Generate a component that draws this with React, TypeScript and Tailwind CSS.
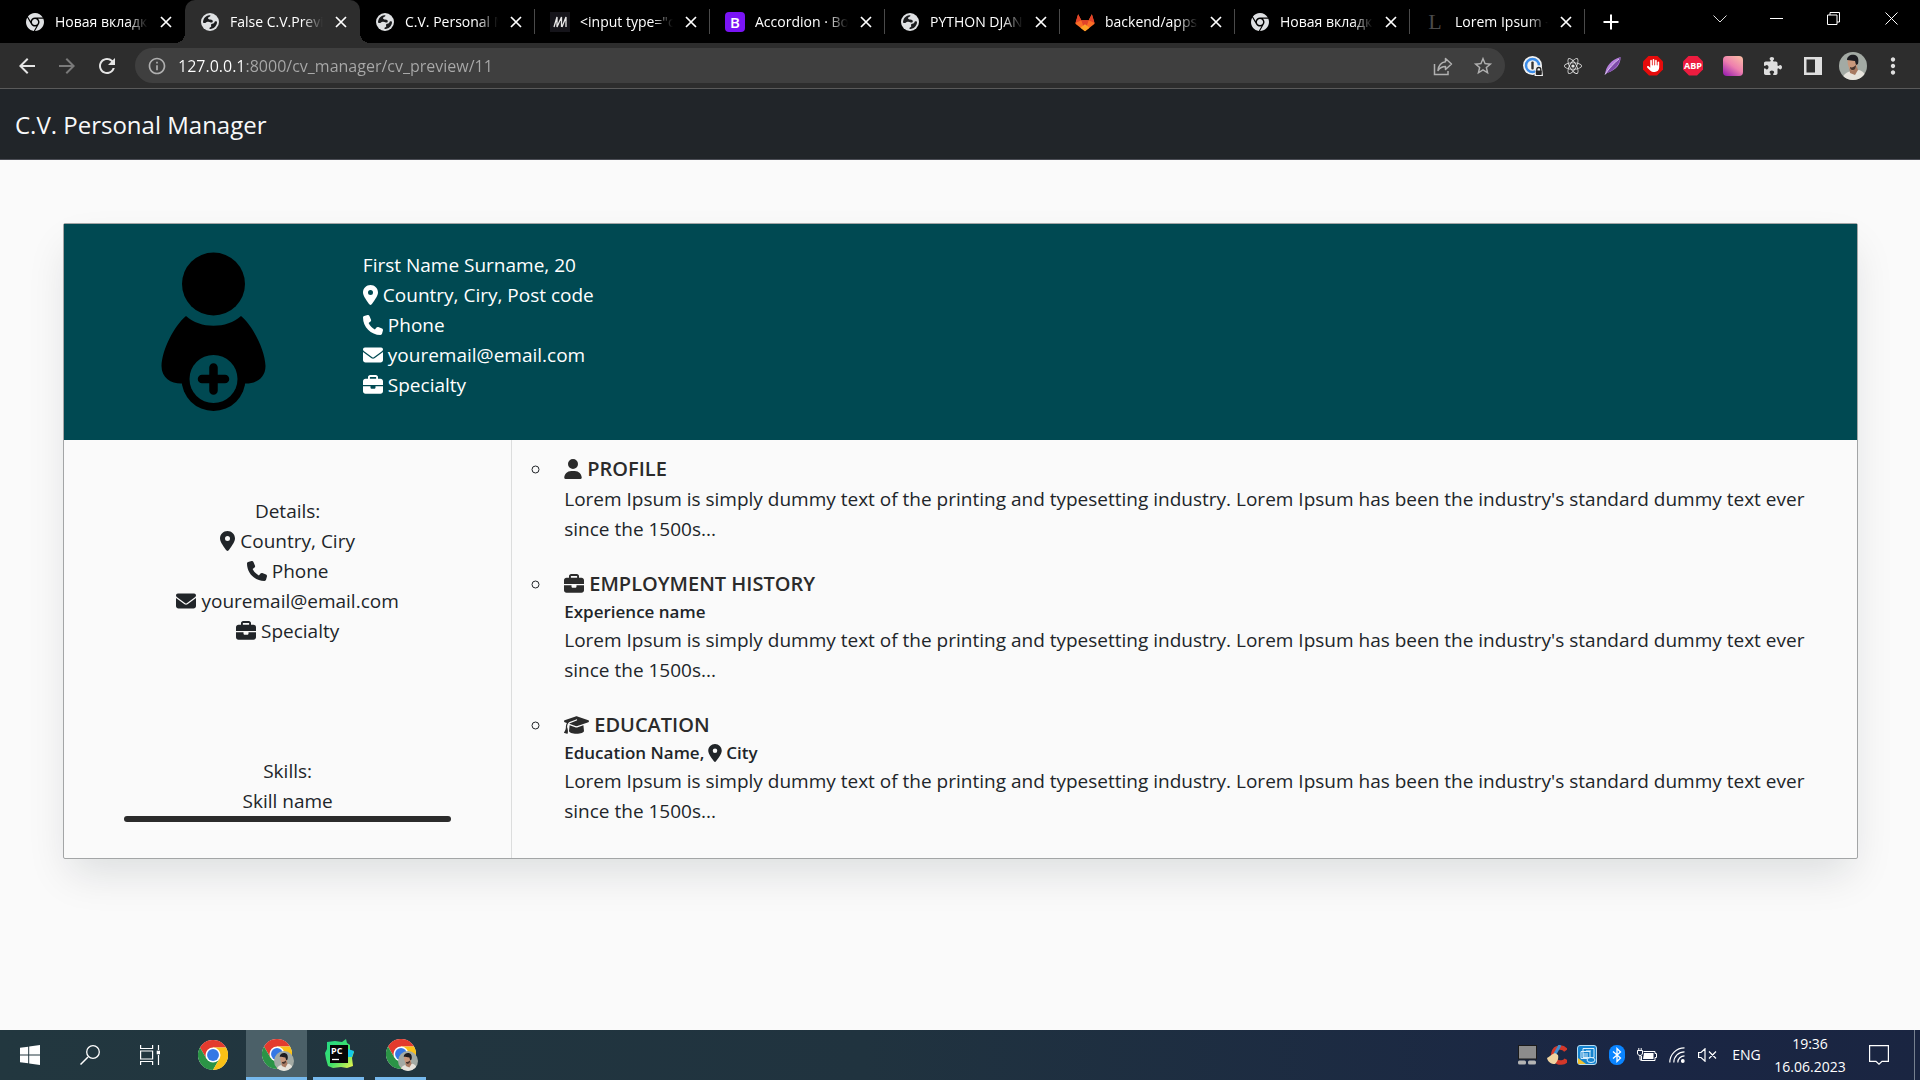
import type { ReactNode } from "react";
import {
  FaBriefcase,
  FaChrome,
  FaEnvelope,
  FaGraduationCap,
  FaHand,
  FaLocationDot,
  FaPhone,
  FaPuzzlePiece,
  FaReact,
  FaUser,
} from "react-icons/fa6";
import { MdArrowBack, MdArrowForward, MdInfoOutline, MdMoreVert, MdRefresh, MdStarBorder } from "react-icons/md";

const LOREM =
  "Lorem Ipsum is simply dummy text of the printing and typesetting industry. Lorem Ipsum has been the industry's standard dummy text ever since the 1500s...";

/* ---------- favicons ---------- */

const Globe = () => (
  <svg viewBox="0 0 18 18" className="size-[18px]" aria-hidden="true">
    <circle cx="9" cy="9" r="9" fill="#dfe1e3" />
    <path
      d="M2 9.2c.2-3.600 2.600-6.400 6.200-7 .9-.1 1.500.1 1.200.7-.4.8-1.700.8-2.200 1.700-.5.800.1 1.700 1.100 1.800 1.300.2 2.900.1 3.400 1.300.5 1.300-.8 2.200-1.900 1.700-1.300-.5-2.600-1-3.900-.5-1.100.4-1.500 1.300-2.500 1.100-.8-.1-1.400-.3-1.400-.8z"
      fill="#1b1c1e"
    />
    <path
      d="M16 9.500c-.3 3.200-2.700 5.900-6 6.400-1.100.2-1.900-.2-1.500-1 .4-.7 1.300-.6 1.700-1.400.3-.8-.5-1.300-.1-2.100.5-.9 1.900-.5 2.700-1.200.7-.6.7-1.600 1.600-1.900.9-.2 1.700.3 1.600 1.200z"
      fill="#1b1c1e"
    />
  </svg>
);

const ChromeMono = () => <FaChrome className="size-[18px] text-[#dfe1e3]" aria-hidden="true" />;

const Mdn = () => (
  <svg viewBox="0 0 20 20" className="size-5" aria-hidden="true">
    <rect width="20" height="20" fill="#15141a" />
    <path d="M4 15 7 5v10L11.500 5v10M12 15 16 5v10" stroke="#e8e8e8" strokeWidth="1.300" fill="none" />
  </svg>
);

const Bootstrap = () => (
  <span className="flex size-5 items-center justify-center rounded bg-[#7a14f5] text-[15px] leading-5 font-semibold text-white">B</span>
);

const Gitlab = () => (
  <svg viewBox="0 0 24 24" className="size-[22px]" aria-hidden="true">
    <path d="M12 22 1.500 14 4.500 3.500 8 10h8l3.500-6.500 3 10.500z" fill="#fc6d26" />
    <path d="M12 22 8 10h8z" fill="#e24329" />
    <path d="M1.500 13 4.500 3.500 8 10zM22.500 13l-3-9.500L16 10z" fill="#e24329" />
    <path d="M7 18.200 12 22l5-3.800-5-3.700z" fill="#fca326" />
  </svg>
);

const LetterL = () => (
  <span className="block w-5 text-center font-['Liberation_Serif',serif] text-[22px] leading-5 text-[#4a4a4a]">L</span>
);

const TABS: { title: string; icon: ReactNode; active?: boolean; divider?: boolean }[] = [
  { title: "Новая вкладка", icon: <ChromeMono /> },
  { title: "False C.V.Previ", icon: <Globe />, active: true },
  { title: "C.V. Personal M", icon: <Globe />, divider: true },
  { title: '<input type="c', icon: <Mdn />, divider: true },
  { title: "Accordion · Bo", icon: <Bootstrap />, divider: true },
  { title: "PYTHON DJAN", icon: <Globe />, divider: true },
  { title: "backend/apps/", icon: <Gitlab />, divider: true },
  { title: "Новая вкладка", icon: <ChromeMono />, divider: true },
  { title: "Lorem Ipsum -", icon: <LetterL />, divider: true },
];

const Cross = () => (
  <svg viewBox="0 0 12 12" className="size-3" aria-hidden="true">
    <path d="M1 1l10 10M11 1 1 11" stroke="#fff" strokeWidth="1.700" />
  </svg>
);

function TabStrip() {
  return (
    <div className="flex h-[43px] bg-black pl-[10px] text-white">
      {TABS.map((tab, i) => (
        <div
          key={i}
          className={
            tab.active
              ? "relative flex w-[175px] items-center rounded-t-[10px] bg-[#2d2d2d] pl-[14px] before:absolute before:bottom-0 before:-left-[10px] before:size-[10px] before:bg-[radial-gradient(circle_at_0_0,transparent_10px,#2d2d2d_10px)] after:absolute after:-right-[10px] after:bottom-0 after:size-[10px] after:bg-[radial-gradient(circle_at_100%_0,transparent_10px,#2d2d2d_10px)]"
              : "flex w-[175px] items-center pl-[14px]"
          }
        >
          <button type="button" className="flex min-w-0 flex-1 items-center gap-[9px] text-left">
            <span className="flex w-[22px] shrink-0 justify-center">{tab.icon}</span>
            <span className="min-w-0 flex-1 overflow-hidden text-[14px] leading-5 whitespace-nowrap [mask-image:linear-gradient(to_right,black_78%,transparent)]">
              {tab.title}
            </span>
          </button>
          <button type="button" aria-label="Close tab" className="flex w-[35px] items-center justify-center">
            <Cross />
          </button>
          <span className={tab.divider ? "ml-px h-[25px] w-px bg-[#4a4a4a]" : "ml-px w-px"} />
        </div>
      ))}
      <button type="button" aria-label="New tab" className="flex w-[52px] items-center justify-center">
        <svg viewBox="0 0 16 16" className="size-4" aria-hidden="true">
          <path d="M8 .5v15M.5 8h15" stroke="#fff" strokeWidth="2" />
        </svg>
      </button>
      <div className="ml-auto flex h-[37px]">
        <button type="button" aria-label="Search tabs" className="flex w-[57px] items-center justify-center">
          <svg viewBox="0 0 14 8" className="h-2 w-[14px]" aria-hidden="true">
            <path d="M.5.5 7 7 13.500.5" stroke="#ddd" fill="none" />
          </svg>
        </button>
        <button type="button" aria-label="Minimize" className="flex w-[57px] items-center justify-center">
          <span className="h-px w-[13px] bg-white" />
        </button>
        <button type="button" aria-label="Restore" className="flex w-[57px] items-center justify-center">
          <svg viewBox="0 0 13 13" className="size-[13px]" aria-hidden="true">
            <path d="M.5 3h9.500v9.500H.5zM3 3V.5h9.500V10H10" stroke="#fff" fill="none" />
          </svg>
        </button>
        <button type="button" aria-label="Close" className="flex w-[58px] items-center justify-center">
          <svg viewBox="0 0 13 13" className="size-[13px]" aria-hidden="true">
            <path d="M.5.5l12 12M12.500.5l-12 12" stroke="#fff" />
          </svg>
        </button>
      </div>
    </div>
  );
}

/* ---------- toolbar ---------- */

const Face = ({ className }: { className: string }) => (
  <svg viewBox="0 0 28 28" className={className} aria-hidden="true">
    <clipPath id="face">
      <circle cx="14" cy="14" r="14" />
    </clipPath>
    <g clipPath="url(#face)">
      <rect width="28" height="28" fill="#a3aaa4" />
      <path d="M3 28c1-6 5-8 9-9l8-1c4 1 7 4 7 10z" fill="#e6e3dc" />
      <path d="M10 14l1 7 5 2 3-5-2-6z" fill="#a87a62" />
      <path d="M9 7c3-3 8-2 9 1 1 4 0 8-3 10-2 1-4 0-5-2-1-3-2-6-1-9z" fill="#c9987c" />
      <path d="M8 8c0-4 4-6 8-5 3 1 4 4 3 9l-2 1-1-4c-3 0-5-1-8-1z" fill="#1d1d22" />
      <path d="M11 15c2 1 4 0 6-2 0 3-1 5-3 5-2 .5-3-1-3-3z" fill="#46332d" />
    </g>
  </svg>
);

const EXTENSIONS: { label: string; icon: ReactNode }[] = [
  {
    label: "Password manager",
    icon: (
      <svg viewBox="0 0 20 20" className="size-5" aria-hidden="true">
        <circle cx="9.500" cy="9.500" r="9.500" fill="#f1f1f1" />
        <circle cx="9.500" cy="9.500" r="6.500" fill="#f1f1f1" stroke="#3b8ce8" strokeWidth="2.500" />
        <rect x="8.300" y="5.500" width="2.400" height="8" rx="1" fill="#333" />
        <path d="M12.500 12.500a3.300 3.300 0 0 1 6.600 0L20 20h-8.500z" fill="#f1f1f1" />
        <path d="M13.800 15v-1.500a2 2 0 0 1 4 0V15" stroke="#222" strokeWidth="1.300" fill="none" />
        <rect x="12.800" y="14.500" width="6" height="4.500" rx=".8" fill="#222" />
      </svg>
    ),
  },
  { label: "React tools", icon: <FaReact className="size-[18px] text-[#e4e4e4]" /> },
  {
    label: "Feather",
    icon: (
      <svg viewBox="0 0 20 20" className="size-5" aria-hidden="true">
        <path d="M2 18.500C3 10 8 4 17.500 1 18 7 14 14 4 17z" fill="#b57fdc" />
        <path d="M2 18.500C6 12 10 8 17.500 1 17 8 12 14 4 17z" fill="#7d4ba8" />
        <path d="M2 18.500C6 12 11 7 16 3" stroke="#f0e4fa" strokeWidth=".8" fill="none" />
      </svg>
    ),
  },
  {
    label: "Ad blocker",
    icon: (
      <span className="flex size-5 items-center justify-center bg-[#e60b0b] [clip-path:polygon(30%_0,70%_0,100%_30%,100%_70%,70%_100%,30%_100%,0_70%,0_30%)]">
        <FaHand className="size-[13px] text-white" />
      </span>
    ),
  },
  {
    label: "ABP",
    icon: (
      <span className="flex size-5 items-center justify-center bg-[#ed1c3f] text-[9px] leading-5 font-bold text-white [clip-path:polygon(30%_0,70%_0,100%_30%,100%_70%,70%_100%,30%_100%,0_70%,0_30%)]">
        ABP
      </span>
    ),
  },
  {
    label: "Gradient",
    icon: <span className="size-5 rounded-sm bg-[linear-gradient(35deg,#9a1fb0_5%,#ee7fae_50%,#fbc2a4)]" />,
  },
  { label: "Extensions", icon: <FaPuzzlePiece className="size-[18px] text-[#dedede]" /> },
  {
    label: "Side panel",
    icon: (
      <svg viewBox="0 0 18 18" className="size-[18px]" aria-hidden="true">
        <path d="M0 0h18v18H0zm2.500 2.500v13H11v-13z" fill="#dedede" fillRule="evenodd" />
      </svg>
    ),
  },
  { label: "Profile", icon: <Face className="size-7" /> },
  { label: "Menu", icon: <MdMoreVert className="size-[26px] text-[#dedede]" /> },
];

function Toolbar() {
  return (
    <div className="flex h-[46px] items-center border-b border-[#5a5a5a] bg-[#2d2d2d] pr-[7px] pl-[7px]">
      <button type="button" aria-label="Back" className="flex w-10 justify-center text-[#e4e4e4]">
        <MdArrowBack className="size-6" />
      </button>
      <button type="button" aria-label="Forward" className="flex w-10 justify-center text-[#7a7a7a]">
        <MdArrowForward className="size-6" />
      </button>
      <button type="button" aria-label="Reload" className="flex w-10 justify-center text-[#e4e4e4]">
        <MdRefresh className="size-6" />
      </button>
      <div className="ml-2 flex h-[35px] flex-1 items-center rounded-full bg-[#3f3f3f] pr-[2px] pl-3 text-[#b0b0b0]">
        <MdInfoOutline className="mr-[11px] size-5" aria-hidden="true" />
        <input
          type="text"
          aria-label="Address"
          defaultValue="127.0.0.1:8000/cv_manager/cv_preview/11"
          className="min-w-0 flex-1 bg-[linear-gradient(to_right,#ffffff_68px,#a9a9a9_68px)] bg-clip-text text-[16px] leading-6 text-transparent outline-none"
        />
        <button type="button" aria-label="Share" className="flex w-10 justify-center">
          <svg viewBox="0 0 20 20" className="size-5" aria-hidden="true">
            <path d="M1.500 8v10.500h13.500V15" stroke="currentColor" strokeWidth="1.500" fill="none" />
            <path d="M12.500 2.500 18.500 8l-6 5.500V10.500C9 10.500 7 11.500 5 14.500 5.500 9.500 8 6.500 12.500 5.800z" stroke="currentColor" strokeWidth="1.500" strokeLinejoin="round" fill="none" />
          </svg>
        </button>
        <button type="button" aria-label="Bookmark" className="flex w-10 justify-center">
          <MdStarBorder className="size-[22px]" />
        </button>
      </div>
      <div className="ml-2 flex">
        {EXTENSIONS.map((e) => (
          <button key={e.label} type="button" aria-label={e.label} className="flex h-7 w-10 items-center justify-center">
            {e.icon}
          </button>
        ))}
      </div>
    </div>
  );
}

/* ---------- page ---------- */

const Line = ({ icon, children }: { icon?: ReactNode; children: ReactNode }) => (
  <p className="flex items-center gap-[5px]">
    {icon}
    {children}
  </p>
);

const Pin = () => <FaLocationDot className="h-5 w-[15px] shrink-0" aria-hidden="true" />;
const Phone = () => <FaPhone className="size-5 shrink-0" aria-hidden="true" />;
const Mail = () => <FaEnvelope className="size-5 shrink-0" aria-hidden="true" />;
const Case = () => <FaBriefcase className="size-5 shrink-0" aria-hidden="true" />;

const PersonAdd = () => (
  <svg viewBox="0 0 107 160" className="h-40 w-[107px]" role="img" aria-label="Add photo">
    <circle cx="53.500" cy="32" r="31.500" />
    <path d="M26 64C40 77 67 77 81 64C93 74 105 98 105.500 114C105.500 126 96 131.500 86 131.500H21C11 131.500 1.500 126 1.500 114C2 98 14 74 26 64Z" />
    <circle cx="53.500" cy="127" r="32" />
    <circle cx="53.500" cy="127" r="24" fill="#004952" />
    <path d="M53.500 115.500v23M42 127h23" stroke="#000" strokeWidth="8.500" strokeLinecap="round" />
  </svg>
);

const SECTIONS: { icon: ReactNode; title: string; sub?: ReactNode }[] = [
  { icon: <FaUser className="h-5 w-[18px]" aria-hidden="true" />, title: "PROFILE" },
  { icon: <Case />, title: "EMPLOYMENT HISTORY", sub: "Experience name" },
  {
    icon: <FaGraduationCap className="h-5 w-[25px]" aria-hidden="true" />,
    title: "EDUCATION",
    sub: (
      <>
        Education Name, <FaLocationDot className="h-[18px] w-[14px]" aria-hidden="true" /> City
      </>
    ),
  },
];

function Page() {
  return (
    <main className="flex-1 bg-[#fafafa] pt-[63px] pr-[62px] pl-[63px]">
      <article className="rounded-[2px] border border-[#a3a5a6] bg-[#fafafa] shadow-[0_20px_40px_-6px_rgba(10,25,35,0.12)]">
        <header className="grid grid-cols-[1fr_5fr] bg-[#004952] pt-[26px] pb-7 text-[19px] leading-[30px] text-white">
          <div className="flex justify-center pt-[2px]">
            <PersonAdd />
          </div>
          <div>
            <Line>First Name Surname, 20</Line>
            <Line icon={<Pin />}>Country, Ciry, Post code</Line>
            <Line icon={<Phone />}>Phone</Line>
            <Line icon={<Mail />}>youremail@email.com</Line>
            <Line icon={<Case />}>Specialty</Line>
          </div>
        </header>
        <div className="grid grid-cols-[1fr_3fr]">
          <aside className="flex flex-col border-r border-[#dcdddd] px-[60px] pt-14 pb-9 text-[19px] leading-[30px] text-[#212529]">
            <section className="flex flex-col items-center">
              <Line>Details:</Line>
              <Line icon={<Pin />}>Country, Ciry</Line>
              <Line icon={<Phone />}>Phone</Line>
              <Line icon={<Mail />}>youremail@email.com</Line>
              <Line icon={<Case />}>Specialty</Line>
            </section>
            <section className="mt-auto flex flex-col items-center">
              <Line>Skills:</Line>
              <Line>Skill name</Line>
              <div role="progressbar" aria-label="Skill name" aria-valuenow={100} className="h-[6px] w-full rounded-full bg-[#2b2b2b]" />
            </section>
          </aside>
          <ul className="flex list-[circle] flex-col gap-[25px] pt-[14px] pr-10 pb-8 pl-10 text-[#212529]">
            {SECTIONS.map((s) => (
              <li key={s.title} className="pl-3 text-[19px] leading-[30px]">
                <h2 className="inline-flex items-center gap-[5px] align-top text-[20px] font-semibold text-[#2b2b2b]">
                  {s.icon}
                  {s.title}
                </h2>
                {s.sub && <h3 className="flex items-center gap-1 text-[17px] leading-[26px] font-semibold">{s.sub}</h3>}
                <p>{LOREM}</p>
              </li>
            ))}
          </ul>
        </div>
      </article>
    </main>
  );
}

/* ---------- taskbar ---------- */

const ChromeColor = () => (
  <svg viewBox="0 0 48 48" className="size-[30px]" aria-hidden="true">
    <circle cx="24" cy="24" r="24" fill="#fff" />
    <path d="M24 12h20.800A24 24 0 0 0 3.200 12l10.400 18L24 24z" fill="#e33b2e" />
    <path d="M13.600 30 3.200 12A24 24 0 0 0 24 48l10.400-18L24 24z" fill="#2b9346" />
    <path d="M34.400 30 24 48A24 24 0 0 0 44.800 12H24v12z" fill="#fbc116" />
    <circle cx="24" cy="24" r="12" fill="#fff" />
    <circle cx="24" cy="24" r="9.500" fill="#3478e5" />
  </svg>
);

const ChromeProfile = () => (
  <span className="relative">
    <ChromeColor />
    <Face className="absolute -right-[2px] -bottom-[2px] size-5" />
  </span>
);

const PyCharm = () => (
  <svg viewBox="0 0 30 30" className="size-[30px]" aria-hidden="true">
    <defs>
      <linearGradient id="pc" x1="0" y1="0" x2="1" y2="1">
        <stop offset="0" stopColor="#21d789" />
        <stop offset=".55" stopColor="#3fe06a" />
        <stop offset="1" stopColor="#fcf84a" />
      </linearGradient>
    </defs>
    <path d="M3 3l8-1 7 1 4-3 1 4 3 2v5l4 2-2 6 1 8-6 2-6-1-8 1-5-2-2-7-1-6 2-4z" fill="url(#pc)" />
    <path d="M24 10l6 2-2 6h-4z" fill="#14c8e8" />
    <rect x="6" y="6" width="18" height="18" fill="#050505" />
    <text x="7" y="15" fontFamily="Open Sans" fontSize="9" fontWeight="700" fill="#fff">PC</text>
    <path d="M8 20.500h7" stroke="#fff" strokeWidth="1.300" />
  </svg>
);

function Taskbar() {
  return (
    <footer className="flex h-[50px] bg-[linear-gradient(to_right,#22373f,#20333f_45%,#1a2644_85%,#1a2541)] text-[14px] text-white">
      <button type="button" aria-label="Start" className="flex w-[60px] items-center justify-center">
        <svg viewBox="0 0 20 20" className="size-5" aria-hidden="true">
          <path d="M0 2.800 8.200 1.700v7.800H0zM9.200 1.500 20 0v9.500H9.200zM0 10.500h8.200v7.800L0 17.200zM9.200 10.500H20V20L9.200 18.500z" fill="#fff" />
        </svg>
      </button>
      <button type="button" aria-label="Search" className="flex w-[60px] items-center justify-center">
        <svg viewBox="0 0 20 20" className="size-5" aria-hidden="true">
          <path d="M8 12 .5 19.500" stroke="#fff" strokeWidth="1.500" />
          <circle cx="13" cy="7" r="6.300" stroke="#fff" strokeWidth="1.300" fill="none" />
        </svg>
      </button>
      <button type="button" aria-label="Task view" className="flex w-[60px] items-center justify-center">
        <svg viewBox="0 0 20 20" className="size-5" stroke="#fff" strokeWidth="1.200" fill="none" aria-hidden="true">
          <path d="M.6 0v3.500h12V0M.6 6h12v8H.6zM.6 20v-3.500h12V20M18.500 0v5M18.500 10v10" />
          <rect x="17.300" y="6.300" width="2.400" height="2.400" fill="#fff" />
        </svg>
      </button>
      <button type="button" aria-label="Chrome" className="mr-[2px] ml-[2px] flex w-[62px] items-center justify-center">
        <ChromeColor />
      </button>
      <button type="button" aria-label="Chrome profile window" className="flex w-[61px] items-center justify-center border-b-[3px] border-[#76b9ed] bg-[#4b6068]">
        <ChromeProfile />
      </button>
      <button type="button" aria-label="PyCharm" className="ml-[6px] flex w-[51px] items-center justify-center border-b-[3px] border-[#76b9ed]">
        <PyCharm />
      </button>
      <button type="button" aria-label="Chrome second profile" className="ml-[11px] flex w-[51px] items-center justify-center border-b-[3px] border-[#76b9ed]">
        <ChromeProfile />
      </button>
      <div className="ml-auto flex items-center">
        <span className="flex w-[30px] justify-center">
          <svg viewBox="0 0 19 20" className="h-5 w-[19px]" aria-hidden="true">
            <rect x=".5" y=".5" width="18" height="13.500" fill="#8c8c8c" stroke="#1b1b1b" />
            <rect x="0" y="15.500" width="8" height="4" rx="1.500" fill="#b4b4b4" />
            <rect x="10" y="15.500" width="8" height="4" rx="1.500" fill="#b4b4b4" />
          </svg>
        </span>
        <span className="flex w-[30px] justify-center">
          <svg viewBox="0 0 20 20" className="size-5" aria-hidden="true">
            <path d="M19 5.500C16 1.500 8 1 6.500 8c-1 6 3 10 8 9.500 2 0 4-1 5-3" stroke="#d3382a" strokeWidth="4.500" fill="none" />
            <path d="M13 0 8 9" stroke="#3e8fd0" strokeWidth="3" />
            <path d="M8 8c-3 1-6 4-8 5 1 4 4 6 8 6 2-2 4-5 3-9z" fill="#efd3a0" />
          </svg>
        </span>
        <span className="flex w-[30px] justify-center">
          <svg viewBox="0 0 20 20" className="size-5" aria-hidden="true">
            <rect x=".5" y=".5" width="19" height="19" rx="2.500" fill="#1583cf" stroke="#b9dcf2" />
            <path d="M1 13v6h8z" fill="#f2c230" />
            <path d="M6 3.500h11v9H6zM4 6.500h9v7H4z" stroke="#d9effc" fill="none" />
            <path d="M6 9h5M6 11h5M9 6h5" stroke="#d9effc" />
            <ellipse cx="14" cy="15" rx="4" ry="2.500" stroke="#d9effc" fill="#1583cf" />
          </svg>
        </span>
        <span className="flex w-[30px] justify-center">
          <svg viewBox="0 0 16 20" className="h-5 w-4" aria-hidden="true">
            <rect width="16" height="20" rx="7.500" fill="#0a84ff" />
            <path d="M4 6.500 11.500 13 8 16.500v-13L11.500 7 4 13.500" stroke="#fff" strokeWidth="1.300" fill="none" />
          </svg>
        </span>
        <span className="flex w-[30px] justify-center">
          <svg viewBox="0 0 20 14" className="h-[14px] w-5" aria-hidden="true">
            <path d="M6.500 3.500H18v2h1.500v4H18v3H4.500V8" stroke="#fff" fill="none" />
            <path d="M7 5h9.500v6H6z" fill="#fff" />
            <path d="M.5 2.500h5V5c0 1.500-1 2.500-2.500 2.500S.5 6.500.5 5zM1.800 0v2.500M4.200 0v2.500M3 7.500V12h2" stroke="#fff" fill="none" />
          </svg>
        </span>
        <span className="flex w-[30px] justify-center">
          <svg viewBox="0 0 16 16" className="size-4" stroke="#fff" strokeWidth="1.200" fill="none" aria-hidden="true">
            <path d="M.8 15.500A14.700 14.700 0 0 1 15.500.8M4.800 15.500A10.700 10.700 0 0 1 15.500 4.800M8.800 15.500a6.700 6.700 0 0 1 6.700-6.700" />
            <circle cx="13.800" cy="14" r="1.300" fill="#fff" />
          </svg>
        </span>
        <span className="flex w-[30px] justify-center">
          <svg viewBox="0 0 19 14" className="h-[14px] w-[19px]" stroke="#fff" strokeWidth="1.200" fill="none" aria-hidden="true">
            <path d="M.6 4.500H3L7 .8v12.400L3 9.500H.6zM11 3.500l7 7M18 3.500l-7 7" />
          </svg>
        </span>
        <span className="flex w-[49px] justify-center leading-5">ENG</span>
        <time className="flex w-[78px] flex-col items-center text-[14px] leading-[23px]">
          <span>19:36</span>
          <span>16.06.2023</span>
        </time>
        <button type="button" aria-label="Notifications" className="flex w-[60px] justify-center">
          <svg viewBox="0 0 20 20" className="size-5" aria-hidden="true">
            <path d="M.6.6h18.800v15.800H13L10 19.200 7 16.400H.6z" stroke="#fff" strokeWidth="1.200" fill="none" />
          </svg>
        </button>
        <button type="button" aria-label="Show desktop" className="ml-[5px] h-[50px] w-[6px] border-l border-[#76808f]" />
      </div>
    </footer>
  );
}

export default function App() {
  return (
    <div className="flex min-h-screen flex-col font-['Open_Sans','Noto_Sans',sans-serif]">
      <TabStrip />
      <Toolbar />
      <nav className="flex h-[71px] items-center border-b border-[#4b4d55] bg-[#212529] px-[15px] pt-[2px]">
        <a href="#" className="text-[24px] leading-9 text-[#f8f9fa]">
          C.V. Personal Manager
        </a>
      </nav>
      <Page />
      <Taskbar />
    </div>
  );
}
